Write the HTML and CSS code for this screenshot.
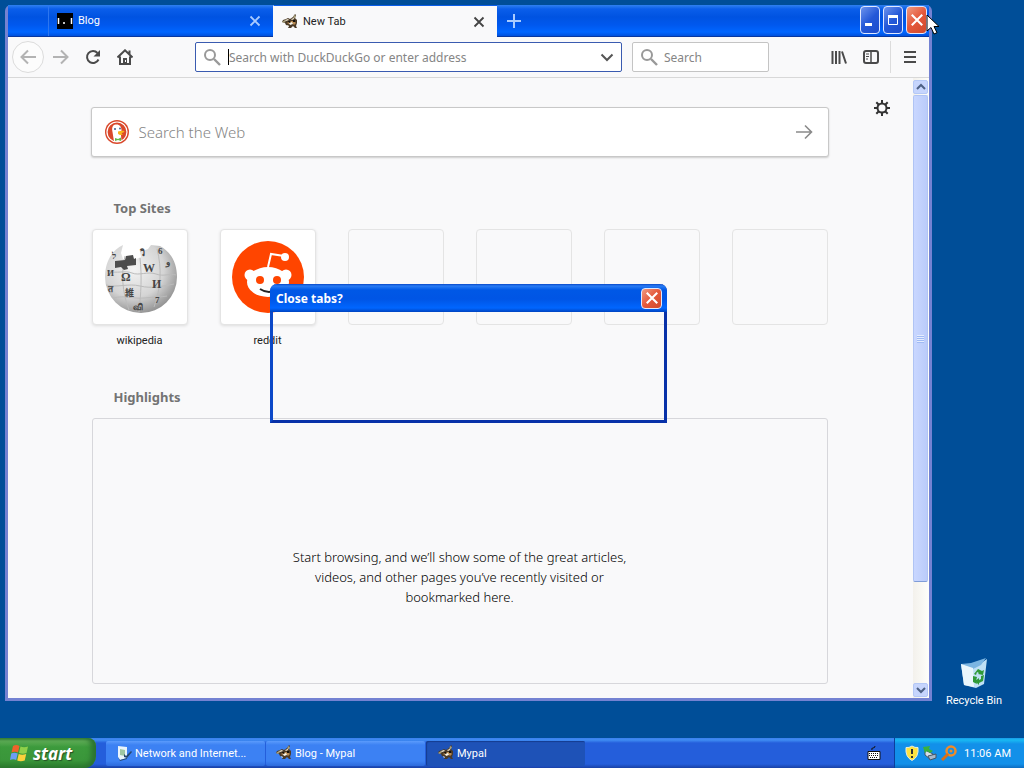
FILE: index.html
```html
<!DOCTYPE html>
<html lang="en">
  <head>
    <meta charset="utf-8">
    <title>New Tab - Mypal</title>
    <link rel="stylesheet" href="styles.css">
  </head>

  <body>

    <!-- shared icons -->
    <svg class="defs" width="0" height="0">
      <symbol id="raccoon" viewBox="0 0 16 16">
        <path d="M1 6l3-1 2-1 2 1 3-2 2-3 1 1-1 3 2 2v3l-1 3 1 2h-2l-2-2-2 2H6l1-2-3-1-1-2-3-1z" fill="#4b3a26"/>
        <path d="M12 1l2 1-1 2-2 1zM0 8l3-2 1 1-2 2z" fill="#a8a07e"/>
        <path d="M3 6l3-1 1 1-3 1zM9 5l3-1v1l-2 1z" fill="#f1ead6"/>
        <path d="M5 9l3-2h4l2 2-2 2-2-2-3 1z" fill="#b98a50"/>
        <path d="M7 9l3-1 1 2-3 1zM5 11l2 1-1 1z" fill="#f7f3e8"/>
        <path d="M6 7l2 0 1 1-2 1zM11 6h2v2h-2z" fill="#15110c"/>
      </symbol>
      <symbol id="lens" viewBox="0 0 18 18">
        <circle cx="7" cy="7" r="5" fill="none" stroke="#999" stroke-width="2"/>
        <path d="M11 11l6 6" stroke="#999" stroke-width="2.4"/>
      </symbol>
      <symbol id="cross" viewBox="0 0 12 12">
        <path d="M1.500 1.500l9 9M10.500 1.500l-9 9" fill="none" stroke="currentColor" stroke-width="1.800"/>
      </symbol>
    </svg>

    <main class="desktop">

      <section class="window">
        <header class="titlebar">
          <div class="tab">
            <svg width="16" height="16" viewBox="0 0 16 16"><path d="M0 0h16v16H0z"/><path d="M1.500 5v6M14.500 5v6M6 10h2" stroke="#fff" stroke-width="1.500"/></svg>
            <span class="tab-title">Blog</span>
            <button class="tab-close" aria-label="Close tab"><svg width="12" height="12"><use href="#cross"/></svg></button>
          </div>
          <div class="tab active">
            <svg width="16" height="16"><use href="#raccoon"/></svg>
            <span class="tab-title">New Tab</span>
            <button class="tab-close" aria-label="Close tab"><svg width="12" height="12"><use href="#cross"/></svg></button>
          </div>
          <button class="new-tab" aria-label="New tab"><svg width="14" height="14"><path d="M7 0v14M0 7h14" stroke="#a9cbff" stroke-width="2"/></svg></button>
          <div class="controls">
            <button class="control" aria-label="Minimize"><svg width="18" height="24"><path d="M4 15h7v3H4z" fill="#fff"/></svg></button>
            <button class="control" aria-label="Maximize"><svg width="18" height="24"><path d="M4.500 7.500h9v9h-9z" fill="none" stroke="#fff"/><path d="M4 7h10v3H4z" fill="#fff"/></svg></button>
            <button class="control red" aria-label="Close"><svg width="14" height="14"><use href="#cross"/></svg></button>
          </div>
        </header>

        <nav class="toolbar">
          <button class="tool back" aria-label="Back"><svg width="16" height="16"><path d="M16 8H2M8 1.500L1.500 8 8 14.500" fill="none" stroke="#b3b3b3" stroke-width="2"/></svg></button>
          <button class="tool" aria-label="Forward"><svg width="16" height="16"><path d="M0 8h14M8 1.500L14.500 8 8 14.500" fill="none" stroke="#b3b3b3" stroke-width="2"/></svg></button>
          <button class="tool" aria-label="Reload"><svg width="16" height="16"><path d="M13.500 10.500A6 6 0 1 1 12.500 4" fill="none" stroke="#4a4a4a" stroke-width="2"/><path d="M15 1v6.500H8.500z" fill="#4a4a4a"/></svg></button>
          <button class="tool" aria-label="Home"><svg width="16" height="16"><path d="M.5 8.500L8 1.300l7.500 7.200M3 7.500V15h10V7.500M12.500 1.500v4" fill="none" stroke="#4a4a4a" stroke-width="2"/><path d="M6 9h4v6H6z" fill="#4a4a4a"/><path d="M8 11h1v2H8z" fill="#fff"/></svg></button>
          <div class="field url">
            <svg width="18" height="18"><use href="#lens"/></svg>
            <span class="caret"></span>
            <input type="text" aria-label="Address" placeholder="Search with DuckDuckGo or enter address">
            <svg width="14" height="14"><path d="M1.500 4.500L7 10l5.500-5.500" fill="none" stroke="#555" stroke-width="2"/></svg>
          </div>
          <div class="field search">
            <svg width="18" height="18"><use href="#lens"/></svg>
            <input type="text" aria-label="Search" placeholder="Search">
          </div>
          <div class="tools-right">
            <button class="tool" aria-label="Library"><svg width="16" height="16"><path d="M1.500 2v13M5 2v13M8.500 2v13M11 2.500L15 14.500" fill="none" stroke="#4a4a4a" stroke-width="2"/></svg></button>
            <button class="tool" aria-label="Sidebar"><svg width="16" height="16"><rect x="1" y="2" width="14" height="12" rx="2" fill="none" stroke="#4a4a4a" stroke-width="2"/><path d="M8 2v12" stroke="#4a4a4a" stroke-width="1.500"/><path d="M3 5h3M3 7.500h3M3 10h2" stroke="#4a4a4a"/></svg></button>
            <button class="tool menu" aria-label="Menu"><svg width="14" height="14"><path d="M1 2h12M1 7h12M1 12h12" stroke="#4a4a4a" stroke-width="2"/></svg></button>
          </div>
        </nav>

        <div class="view">
          <div class="page">
            <button class="gear" aria-label="Preferences"><svg width="16" height="16"><circle cx="8" cy="8" r="4.500" fill="none" stroke="#333" stroke-width="2"/><path d="M8 0v3.500M8 12.500V16M0 8h3.500M12.500 8H16M2.300 2.300l2.500 2.500M11.200 11.200l2.500 2.500M13.700 2.300l-2.500 2.500M4.800 11.200l-2.500 2.500" stroke="#333" stroke-width="2"/></svg></button>

            <form class="web-search">
              <svg width="24" height="24">
                <circle cx="12" cy="12" r="12" fill="#d9482b"/>
                <circle cx="12" cy="12" r="10" fill="none" stroke="#fff" stroke-width="1.200"/>
                <path d="M9 21.500L7.500 12c-1-4 0-7 3-7.500 4-.5 6 2 6 6l-.5 5 .5 5.500c-3 1.200-5 1-7.500.5z" fill="#fff"/>
                <path d="M13 11.500c3-.8 5-.8 6.500-.2-.5 1.500-3 1.700-3 2.200s1.500.8 1.500 1.200c-2 .8-5 0-5-1.200z" fill="#f9b41c"/>
                <circle cx="10" cy="9" r="1" fill="#3b5d8c"/><circle cx="15" cy="8.500" r=".9" fill="#3b5d8c"/>
                <path d="M10 18l3 1 3-1.500v3.500l-3-1-3 1z" fill="#5fb947"/>
              </svg>
              <input type="text" aria-label="Search the Web" placeholder="Search the Web">
              <button aria-label="Go"><svg width="18" height="16"><path d="M1 8h15M10 1.500L16.500 8 10 14.500" fill="none" stroke="#8a8a8a" stroke-width="1.600"/></svg></button>
            </form>

            <h2>Top Sites</h2>
            <ul class="sites">
              <li>
                <a href="#">
                  <span class="tile filled">
                    <svg width="74" height="74" viewBox="0 0 74 74">
                      <defs><radialGradient id="ball" cx=".4" cy=".35" r=".7"><stop offset="0" stop-color="#f4f4f4"/><stop offset=".6" stop-color="#d4d4d4"/><stop offset="1" stop-color="#8c8c8c"/></radialGradient></defs>
                      <path d="M20 5l-2 8 2 6 9 2 9-4-1-5 8-3 3-4 9 1C68 12 74 23 74 37a36 36 0 1 1-72 0C2 22 9 10 20 5z" fill="url(#ball)"/>
                      <path d="M4 31c10 3 18-1 25 2s16-2 24 1 14-1 20 1M3 45c12 3 22-2 34 1s23 0 34-2M10 58c12-3 20 1 31 0s18-1 23-2M22 16c-4 17-3 36 4 54M37 18c2 18 1 35-1 54M54 9c5 19 4 39-3 58" fill="none" stroke="#bbb" stroke-width="1"/>
                      <path d="M12 21l10-1 1-4 7-1 1 4 2-1v7l-9 1 1 3-4 1-3-3-6 1z" fill="#4d4d4d"/>
                      <g class="glyphs">
                        <text x="18" y="41">Ω</text><text x="40" y="32">W</text><text x="49" y="48">И</text>
                        <text x="22" y="56" class="small">維</text><text x="52" y="63" class="small">7</text>
                        <text x="4" y="36" class="small">И</text><text x="9" y="19" class="small">ל</text><text x="63" y="25" class="small">و</text>
                        <text x="37" y="16" class="small">วิ</text><text x="55" y="14" class="small">6</text><text x="5" y="52" class="small">त</text><text x="30" y="70" class="small">வி</text>
                      </g>
                    </svg>
                  </span>
                  <span class="site-name">wikipedia</span>
                </a>
              </li>
              <li>
                <a href="#">
                  <span class="tile filled">
                    <svg width="74" height="74" viewBox="0 0 74 74">
                      <circle cx="37" cy="37" r="36" fill="#ff4500"/>
                      <path d="M37 27l3-13 13 2" fill="none" stroke="#fff" stroke-width="2"/>
                      <circle cx="54" cy="17" r="4" fill="#fff"/>
                      <circle cx="19" cy="35" r="5.500" fill="#fff"/><circle cx="55" cy="35" r="5.500" fill="#fff"/>
                      <ellipse cx="37" cy="42" rx="21" ry="15" fill="#fff"/>
                      <circle cx="29" cy="40" r="4" fill="#ff4500"/><circle cx="46" cy="40" r="4" fill="#ff4500"/>
                      <path d="M29 49q9 6 18 0" fill="none" stroke="#222" stroke-width="2"/>
                    </svg>
                  </span>
                  <span class="site-name">reddit</span>
                </a>
              </li>
              <li><span class="tile"></span></li>
              <li><span class="tile"></span></li>
              <li><span class="tile"></span></li>
              <li><span class="tile"></span></li>
            </ul>

            <h2>Highlights</h2>
            <div class="highlights">
              <p>Start browsing, and we’ll show some of the great articles, videos, and other pages you’ve recently visited or bookmarked here.</p>
            </div>
          </div>

          <div class="scrollbar">
            <button class="scroll-btn" aria-label="Scroll up"><svg width="10" height="8"><path d="M1 6l4-4 4 4" fill="none" stroke="#4d6185" stroke-width="2"/></svg></button>
            <div class="thumb"><span class="grip"></span></div>
            <button class="scroll-btn end" aria-label="Scroll down"><svg width="10" height="8"><path d="M1 2l4 4 4-4" fill="none" stroke="#4d6185" stroke-width="2"/></svg></button>
          </div>
        </div>
      </section>

      <section class="dialog">
        <header>
          <span>Close tabs?</span>
          <button class="control red" aria-label="Close"><svg width="14" height="14"><use href="#cross"/></svg></button>
        </header>
      </section>

      <a class="shortcut" href="#">
        <svg width="32" height="32" viewBox="0 0 32 32">
          <path d="M3 7l13 4 13-9-3 25-8 4-12-3z" fill="#bfe0f5"/>
          <path d="M3 7l10-1 15-5-5 7-8 4z" fill="#7bb5e2"/>
          <path d="M3 7l12 4 1 19-10-2z" fill="#e9f6fd"/>
          <path d="M16 17l4-5 4 2 2-1-1 5-5-1 1-1-2-1-1 3zM26 18l-1 6-4 2v2l-4-4 4-3v2l2-1v-3zM15 19l4 1-1 4 1 3-4-2z" fill="#2f9a38"/>
        </svg>
        <span>Recycle Bin</span>
      </a>

      <svg class="pointer" width="13" height="21"><path d="M1 1v16l4-3.500L8 20l3-1.300-3-6.200h5z" fill="#fff" stroke="#000"/></svg>
    </main>

    <footer class="taskbar">
      <button class="start">
        <svg width="20" height="18" viewBox="0 0 20 18">
          <path d="M3 2q3-2 6.500 0L8 8.500Q5 7 1.500 8.500z" fill="#f0632b"/>
          <path d="M10.500 2.500Q14 4 18 2.500L16.500 9Q13 10.500 9 9z" fill="#8fd04a"/>
          <path d="M1.200 9.500q3-1.500 6.500 0L6.200 16Q3 14.500 0 16z" fill="#6c9df4"/>
          <path d="M8.700 10q3.500 1.500 7.500 0l-1.500 6.500q-4 1.500-7.500 0z" fill="#fcd13c"/>
        </svg>
        <span>start</span>
      </button>
      <div class="tasks">
        <button class="task">
          <svg width="16" height="16"><path d="M2 1l9 1v11l-7 2-2-3z" fill="#e9f4fb"/><path d="M4 4l5 1v6l-5-1z" fill="#9fc6a3"/><path d="M8 9l2 2 5-5 1 1-5 6-3-1z" fill="#28486e"/><path d="M2 12l2 3 7-2v1l-7 2z" fill="#28486e"/></svg>
          <span>Network and Internet...</span>
        </button>
        <button class="task">
          <svg width="16" height="16"><use href="#raccoon"/></svg>
          <span>Blog - Mypal</span>
        </button>
        <button class="task pressed">
          <svg width="16" height="16"><use href="#raccoon"/></svg>
          <span>Mypal</span>
        </button>
      </div>
      <svg class="keyboard" width="14" height="14"><path d="M5 4q-1-2 1-2t2-2" fill="none" stroke="#111"/><path d="M1 5.500h12v8H1z" fill="#fff" stroke="#111"/><path d="M2 7.500h10M2 9.500h10M3 11.500h8" stroke="#111" stroke-dasharray="1 1"/></svg>
      <div class="tray">
        <svg width="14" height="16"><path d="M7 1q3 2 6 1.500Q14 12 7 15.500 0 12 1 2.500 4 3 7 1z" fill="#ffe23e" stroke="#e8eddc"/><path d="M7 4v5M7 11v2" stroke="#333" stroke-width="2"/></svg>
        <svg width="16" height="16"><path d="M3 5l8 4-3 5-5-4z" fill="#d5dfe8" stroke="#456"/><path d="M6 11l8-2v4l-6 2z" fill="#a8b8c8" stroke="#456"/><path d="M1 2l7-1-1 3 4 2-3 2-3-2-2 2z" fill="#38b13d"/></svg>
        <svg width="16" height="16"><circle cx="10" cy="6" r="4.500" fill="none" stroke="#ef8b28" stroke-width="2.500"/><path d="M7 9l-6 6" stroke="#d96f17" stroke-width="3"/><circle cx="10" cy="6" r="1.500" fill="#ef8b28"/></svg>
        <time>11:06 AM</time>
      </div>
    </footer>

  </body>
</html>
```

FILE: styles.css
```css
* {
  box-sizing: border-box;
}

body {
  margin: 0;
  height: 100vh;
  display: flex;
  flex-direction: column;
  overflow: hidden;
  background: #004e98;
  font-family: "Noto Sans", "Noto Sans CJK JP", sans-serif;
  font-size: 12px;
}

button {
  padding: 0;
  border: 0;
  background: none;
  font: inherit;
  color: inherit;
}

input {
  flex: 1;
  min-width: 0;
  padding: 0;
  border: 0;
  outline: 0;
  background: none;
  font: inherit;
}

a {
  color: inherit;
  text-decoration: none;
}

svg {
  display: block;
  flex: none;
}

.defs {
  position: absolute;
}

.desktop {
  position: relative;
  flex: 1;
}

/* browser window */
.window {
  position: absolute;
  top: 5px;
  left: 5px;
  right: 92px;
  bottom: 37px;
  display: flex;
  flex-direction: column;
  border: 3px solid #7482d2;
  border-top: 0;
  border-radius: 6px 6px 0 0;
  background: #f9f9fa;
}

.titlebar {
  display: flex;
  height: 32px;
  padding-left: 40px;
  border-bottom: 1px solid #0838a0;
  background: linear-gradient(#2f80f0 0, #0a5eea 4px, #0053e1 12px, #0058ee 20px, #0066ff 27px, #0050dc);
  color: #fff;
}

.tab {
  display: flex;
  align-items: center;
  width: 225px;
  padding: 0 12px 0 8px;
  gap: 5px;
  border-left: 1px solid #2c76f0;
  font-family: Roboto, sans-serif;
  font-size: 11px;
}

.tab.active {
  width: 224px;
  height: 32px;
  border-top: 1px solid #0a5eea;
  border-left-color: #f9f9fa;
  background: #f9f9fa;
  color: #222;
}

.tab-title {
  flex: 1;
}

.tab-close {
  color: #a9cbff;
}

.active .tab-close {
  color: #444;
}

.new-tab {
  padding: 0 10px;
}

.controls {
  display: flex;
  gap: 3px;
  margin: 1px 2px 0 auto;
}

.control {
  display: flex;
  align-items: center;
  justify-content: center;
  width: 20px;
  height: 28px;
  border: 1px solid #dfe8ff;
  border-radius: 4px;
  background: linear-gradient(135deg, #6c93ec, #2458d8 50%, #1c4ccc);
  color: #fff;
}

.control.red {
  width: 21px;
  background: linear-gradient(135deg, #f09a80, #e4583b 50%, #d04a2c);
}

.toolbar {
  display: flex;
  align-items: center;
  height: 41px;
  padding-left: 4px;
  border-bottom: 1px solid #d8d8d8;
}

.tool {
  display: flex;
  align-items: center;
  justify-content: center;
  width: 32px;
  height: 32px;
}

.back {
  margin-right: 1px;
  border: 1px solid #dcdcdc;
  border-radius: 50%;
  background: #fcfcfc;
}

.field {
  display: flex;
  align-items: center;
  height: 30px;
  padding: 0 7px;
  border: 1px solid #c4c4c4;
  border-radius: 2px;
  background: #fff;
}

.field input {
  margin-left: 6px;
}

.url {
  flex: 1;
  margin-left: 54px;
  border-color: #3a5bb0;
}

.url input {
  margin-left: 0;
}

.caret {
  width: 1px;
  height: 16px;
  margin-left: 7px;
  background: #000;
}

.search {
  width: 137px;
  margin-left: 10px;
}

::placeholder {
  color: #858585;
  opacity: 1;
}

.tools-right {
  display: flex;
  margin-left: 54px;
}

.menu {
  width: 39px;
  margin-left: 3px;
  border-left: 1px solid #dcdcdc;
}

.view {
  flex: 1;
  display: flex;
  min-height: 0;
}

.page {
  position: relative;
  flex: 1;
  display: flex;
  flex-direction: column;
  align-items: center;
  padding: 29px 2px 14px 0;
}

.gear {
  position: absolute;
  top: 22px;
  right: 23px;
}

.web-search {
  display: flex;
  align-items: center;
  width: 738px;
  height: 50px;
  padding: 0 15px 0 13px;
  gap: 10px;
  border: 1px solid #c8c8c8;
  border-radius: 3px;
  box-shadow: 0 1px 2px #ccc;
  background: #fff;
  font-size: 15px;
  font-weight: 300;
}

h2 {
  width: 736px;
  margin: 0;
  padding-left: 22px;
  font-size: 13px;
  line-height: 20px;
  color: #737373;
}

.web-search + h2 {
  margin: 41px 0 11px;
}

.sites {
  display: flex;
  gap: 32px;
  width: 736px;
  height: 158px;
  margin: 0;
  padding: 0;
  list-style: none;
}

.tile {
  display: flex;
  align-items: center;
  justify-content: center;
  width: 96px;
  height: 96px;
  border: 1px solid #e4e4e4;
  border-radius: 4px;
}

.tile.filled {
  background: #fff;
  box-shadow: 0 1px 3px #ddd;
}

.glyphs {
  font: bold 12px "Liberation Serif", "Noto Sans CJK JP", serif;
  fill: #444;
}

.small {
  font-size: 9px;
}

.site-name {
  display: block;
  padding-top: 6px;
  font-family: Roboto, sans-serif;
  font-size: 11px;
  line-height: 20px;
  text-align: center;
  color: #222;
}

.highlights {
  flex: 1;
  display: flex;
  align-items: center;
  justify-content: center;
  width: 736px;
  margin-top: 11px;
  padding-top: 52px;
  border: 1px solid #d7d7db;
  border-radius: 3px;
}

.highlights p {
  width: 352px;
  margin: 0;
  font-size: 13px;
  font-weight: 300;
  line-height: 20px;
  text-align: center;
  color: #000;
}

.scrollbar {
  display: flex;
  flex-direction: column;
  width: 16px;
  padding: 2px 1px 1px 0;
  background: linear-gradient(90deg, #f3f1ec, #fefefb);
}

.scroll-btn {
  display: flex;
  align-items: center;
  justify-content: center;
  height: 14px;
  border: 1px solid #b4c8f6;
  border-radius: 2px;
  background: #c6d5fd;
}

.scroll-btn.end {
  margin-top: auto;
}

.thumb {
  display: flex;
  align-items: center;
  justify-content: center;
  height: 79%;
  margin-top: 1px;
  border: 1px solid #b0c4f4;
  border-bottom-color: #7f9cd8;
  border-radius: 2px;
  background: linear-gradient(90deg, #c9d7ff, #bacbfa);
}

.grip {
  width: 7px;
  height: 8px;
  background: repeating-linear-gradient(#e4ecfe 0 1px, #9fbaf4 1px 2px);
}

/* dialog that has not painted its body yet */
.dialog {
  position: absolute;
  top: 284px;
  left: 270px;
  width: 397px;
  height: 139px;
  border: 3px solid #0831a8;
  border-top: 0;
  border-left-color: #0c49c8;
  border-radius: 7px 7px 0 0;
}

.dialog header {
  display: flex;
  align-items: center;
  justify-content: space-between;
  height: 28px;
  margin: 0 -3px;
  padding: 0 5px 0 6px;
  border-radius: 7px 7px 0 0;
  background: linear-gradient(#0848c8 0, #2a7cf4 2px, #0058e6 6px, #0055e5 15px, #0066ff 24px, #0044c0);
  color: #fff;
  font-weight: bold;
}

.dialog .control {
  height: 21px;
}

.shortcut {
  position: absolute;
  right: 10px;
  bottom: 29px;
  width: 80px;
  display: flex;
  flex-direction: column;
  align-items: center;
  gap: 4px;
  color: #fff;
  font-family: Roboto, sans-serif;
  font-size: 11px;
  line-height: 16px;
}

.pointer {
  position: absolute;
  top: 14px;
  left: 926px;
  overflow: visible;
}

/* taskbar */
.taskbar {
  display: flex;
  align-items: center;
  height: 30px;
  background: linear-gradient(#3a80ee 0, #3f8cf3 2px, #245edb 5px, #245edb 26px, #1941a5);
  color: #fff;
  font-family: Roboto, sans-serif;
  font-size: 11px;
}

.start {
  display: flex;
  align-items: center;
  width: 96px;
  height: 30px;
  padding-left: 10px;
  gap: 3px;
  border-radius: 0 8px 12px 0;
  background: linear-gradient(#388238 0, #5eac56 3px, #3c9a3c 9px, #3a963a 22px, #2a7a2c);
  box-shadow: inset -5px 0 5px #2c7430;
  font-family: "Noto Sans", sans-serif;
  font-size: 17px;
  font-weight: bold;
  font-style: italic;
  text-shadow: 1px 1px 1px #244f24;
}

.tasks {
  flex: 1;
  display: flex;
  gap: 1px;
  padding-left: 10px;
}

.task {
  display: flex;
  align-items: center;
  width: 159px;
  height: 25px;
  padding-left: 10px;
  gap: 3px;
  border-radius: 2px;
  background: linear-gradient(#5b9bfc, #3c81f3 4px, #3c81f3 20px, #2d6bdc);
  white-space: nowrap;
}

.task.pressed {
  padding-left: 12px;
  background: #1e52b7;
  box-shadow: inset 1px 1px 1px #153c8f;
}

.keyboard {
  margin-right: 13px;
}

.tray {
  display: flex;
  align-items: center;
  height: 30px;
  padding: 0 13px 0 10px;
  gap: 3px;
  border-left: 1px solid #0c3f9c;
  background: linear-gradient(#1899e8, #19b9f3 2px, #1290e9 6px, #1290e9 26px, #0d6cc0);
}

.tray time {
  margin-left: 4px;
}
```
